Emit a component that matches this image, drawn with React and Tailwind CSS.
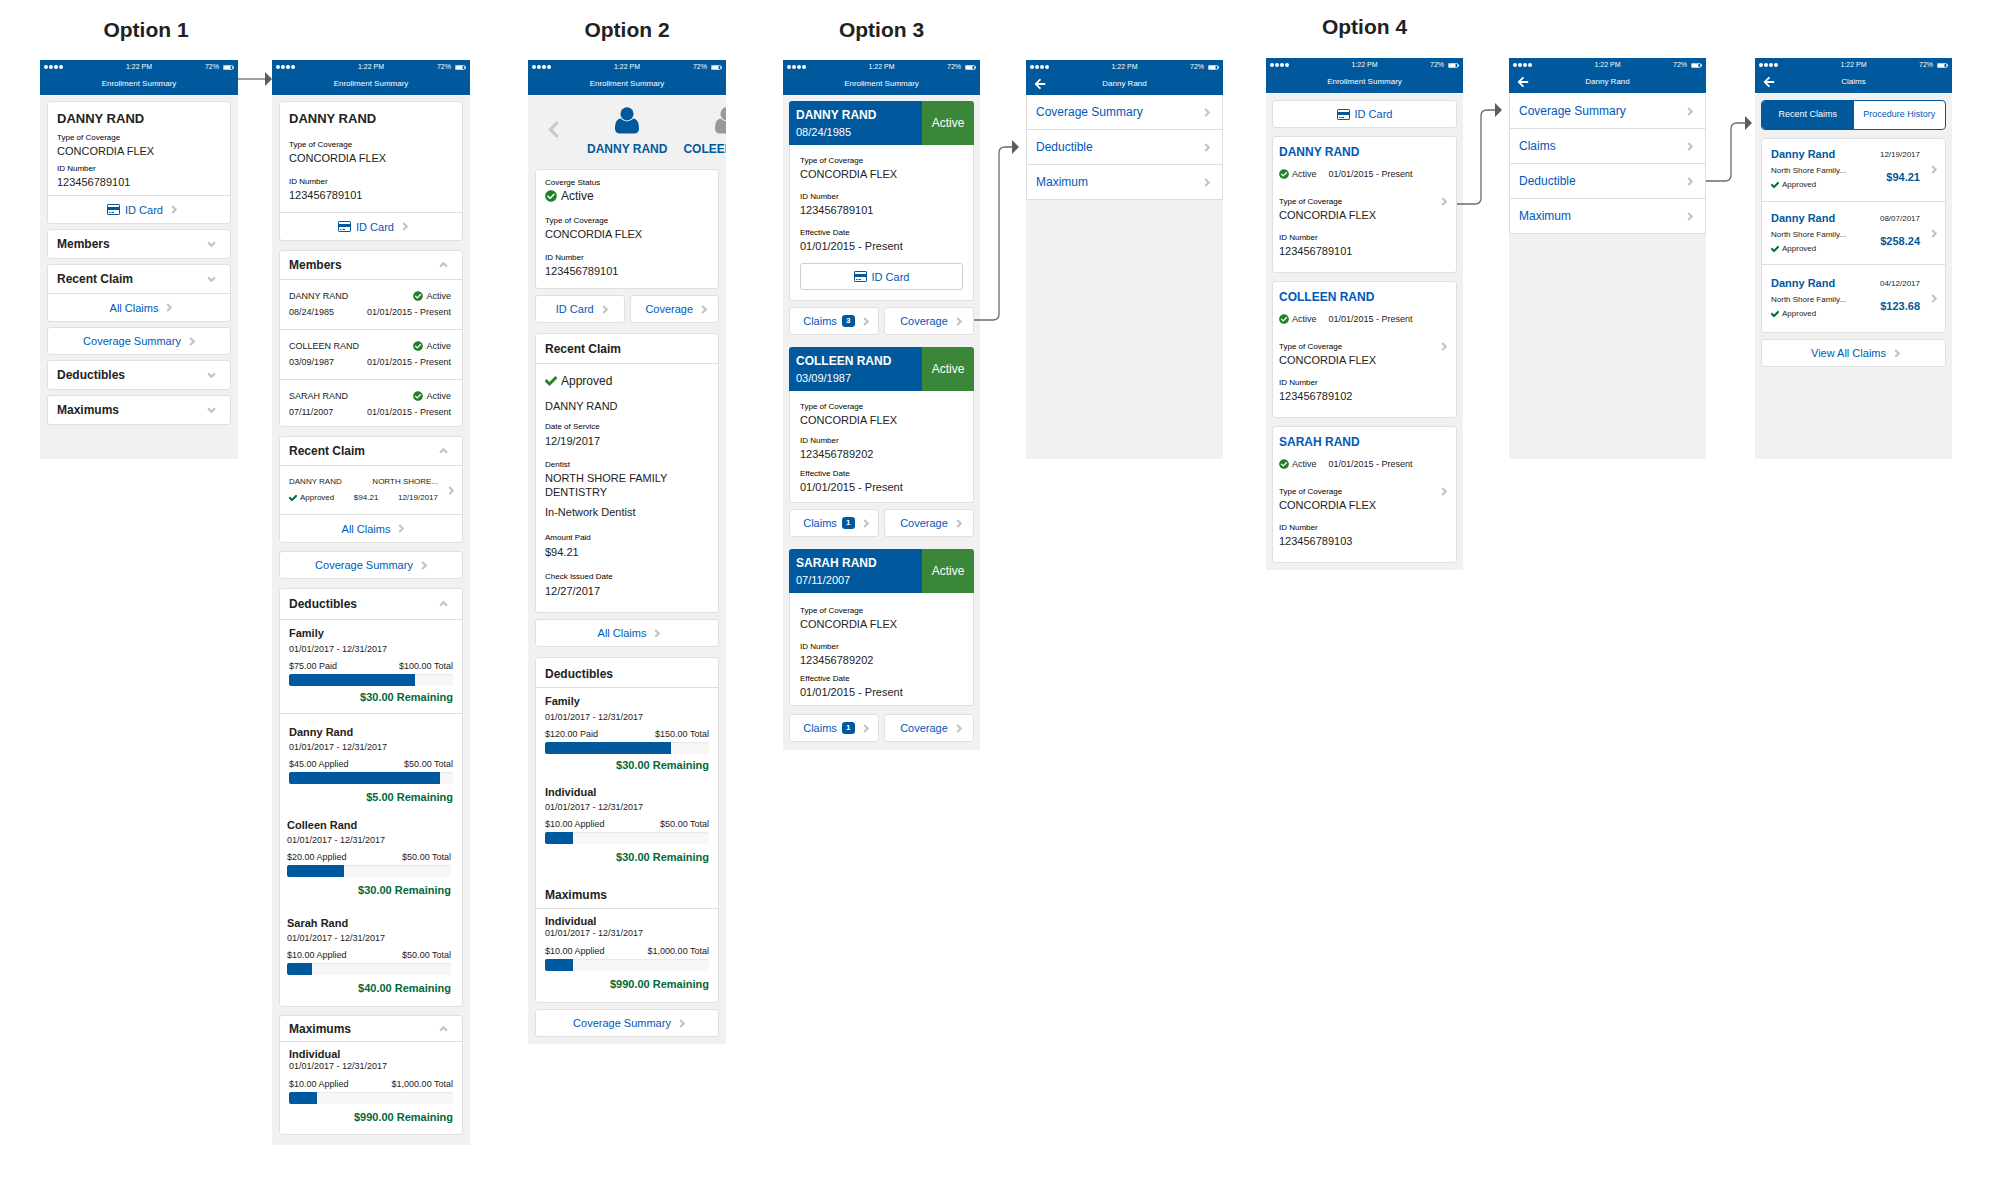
import React from "react";
import { FaArrowLeft, FaCheck, FaCheckCircle } from "react-icons/fa";

/* ---------- icons ---------- */

const chevronPaths = {
  right: "M1.2 1 4.8 4.5 1.2 8",
  down: "M1 1.2 4.5 4.8 8 1.2",
  up: "M1 4.8 4.5 1.2 8 4.8",
};

function Chevron({ dir = "right" }) {
  const side = dir === "right";
  return (
    <svg
      width={side ? 6 : 9}
      height={side ? 9 : 6}
      viewBox={side ? "0 0 6 9" : "0 0 9 6"}
      className="shrink-0 text-[#c2c2c2]"
      fill="none"
      stroke="currentColor"
      strokeWidth="2"
      aria-hidden="true"
    >
      <path d={chevronPaths[dir]} />
    </svg>
  );
}

function CardIcon() {
  return (
    <svg width="13" height="11" viewBox="0 0 13 11" className="shrink-0 text-[#00599c]" aria-hidden="true">
      <rect x="0.5" y="0.5" width="12" height="10" rx="0.6" fill="#fff" stroke="currentColor" />
      <rect x="0" y="3" width="13" height="3" fill="currentColor" />
      <path d="M2 8.5h1.500M4.500 8.500h2.500" stroke="currentColor" strokeWidth="1" fill="none" />
    </svg>
  );
}

function PersonIcon({ className }) {
  return (
    <svg width="24" height="27" viewBox="0 0 24 27" className={className} fill="currentColor" aria-hidden="true">
      <circle cx="12" cy="6.8" r="6.6" />
      <path d="M5.9 11.6C7.400 13.300 9.500 14.400 12 14.400s4.600-1.100 6.100-2.800c4.300 0.300 5.900 4.700 5.900 9.900 0 3.200-2 5.100-4.800 5.100H4.800C2 26.600 0 24.700 0 21.500c0-5.200 1.600-9.600 5.900-9.900Z" />
    </svg>
  );
}

function Battery() {
  return (
    <svg width="11" height="5" viewBox="0 0 11 5" aria-hidden="true">
      <rect x="0.4" y="0.4" width="9.2" height="4.2" rx="0.8" fill="none" stroke="#fff" strokeWidth="0.8" />
      <rect x="1" y="1" width="6.500" height="3" fill="#fff" />
      <rect x="10" y="1.500" width="1" height="2" fill="#fff" />
    </svg>
  );
}

/* ---------- shared pieces ---------- */

function TopBar({ title, back }) {
  return (
    <header className="h-[35px] bg-[#00599c] text-white">
      <div className="grid h-[14px] grid-cols-3 items-center px-1 text-[7px] leading-3">
        <span className="flex gap-px" aria-hidden="true">
          {[0, 1, 2, 3].map((i) => (
            <i key={i} className="size-1 rounded-full bg-white" />
          ))}
        </span>
        <span className="text-center">1:22 PM</span>
        <span className="flex items-center justify-end gap-1">
          72% <Battery />
        </span>
      </div>
      <div className="grid h-5 grid-cols-[24px_1fr_24px] items-center">
        {back ? (
          <button type="button" aria-label="Back" className="flex justify-end">
            <FaArrowLeft size={12} className="mr-1" />
          </button>
        ) : (
          <span />
        )}
        <h3 className="text-center text-[8px] leading-3">{title}</h3>
      </div>
    </header>
  );
}

function Screen({ title, back, place, body, children }) {
  return (
    <article className={`min-w-0 self-start ${place}`}>
      <TopBar title={title} back={back} />
      <div className={`flex flex-col border-t border-white bg-[#f1f1f1] ${body}`}>{children}</div>
    </article>
  );
}

function Card({ className = "", children }) {
  return <section className={`rounded-[3px] border border-[#e0e0e0] bg-white ${className}`}>{children}</section>;
}

function Field({ label, value, className = "", gap = "" }) {
  return (
    <div className={className}>
      <div className="text-[8px] leading-3 text-black">{label}</div>
      <div className={`text-[11px] leading-[14px] ${gap}`}>{value}</div>
    </div>
  );
}

function Action({ children, icon, chevron = true, className = "" }) {
  return (
    <a href="#" className={`flex items-center justify-center gap-2 text-[11px] leading-[14px] text-[#0058b8] ${className}`}>
      <span className="flex items-center gap-[5px]">
        {icon && <CardIcon />}
        {children}
      </span>
      {chevron && <Chevron />}
    </a>
  );
}

function ActionCard({ className = "h-7", ...rest }) {
  return <Action {...rest} className={`rounded-[3px] border border-[#e0e0e0] bg-white ${className}`} />;
}

function Accordion({ title, open, className = "h-7" }) {
  return (
    <button
      type="button"
      aria-expanded={!!open}
      className={`flex w-full items-center justify-between pr-[14px] pl-[9px] text-[12px] leading-[14px] font-bold ${className}`}
    >
      {title}
      <Chevron dir={open ? "up" : "down"} />
    </button>
  );
}

function Meter({ name, left, total, fill, remaining, className = "", dateGap = "mt-[3px]", rowGap = "mt-[5px]", remGap = "mt-1.5" }) {
  return (
    <div className={className}>
      <div className="text-[11px] leading-3 font-bold">{name}</div>
      <div className={`text-[9px] leading-3 ${dateGap}`}>01/01/2017 - 12/31/2017</div>
      <div className={`flex justify-between text-[9px] leading-3 ${rowGap}`}>
        <span>{left}</span>
        <span>{total} Total</span>
      </div>
      <div
        role="progressbar"
        aria-label={name}
        aria-valuenow={fill}
        className="mt-0.5 h-3 overflow-hidden rounded-[2px] bg-[#f7f7f7] shadow-[inset_0_1px_1px_#e6e6e6]"
      >
        <div className="h-full bg-[#00599c]" style={{ width: `${fill}%` }} />
      </div>
      <div className={`text-right text-[11px] leading-[14px] font-bold text-[#00693c] ${remGap}`}>{remaining} Remaining</div>
    </div>
  );
}

function Active() {
  return (
    <span className="flex items-center gap-[3px] text-[9px] leading-3">
      <FaCheckCircle size={10} className="text-[#24812b]" /> Active
    </span>
  );
}

function Approved() {
  return (
    <span className="flex items-center gap-[3px] text-[8px] leading-3">
      <FaCheck size={8} className="text-[#00693c]" stroke="currentColor" strokeWidth={50} /> Approved
    </span>
  );
}

function Connector({ place, d, tip }) {
  const [x, y] = tip;
  return (
    <div className={`relative z-10 row-start-2 h-0 ${place}`}>
      <svg width="100%" height="1" className="absolute top-0 left-0 overflow-visible" fill="none" aria-hidden="true">
        <path d={d} stroke="#6a6a6a" strokeWidth="1.3" />
        <path d={`M${x} ${y}l-7 -7v14z`} fill="#5c5c5c" />
      </svg>
    </div>
  );
}

/* ---------- option 1 ---------- */

function CollapsedSummary() {
  return (
    <Screen title="Enrollment Summary" place="col-start-2 row-start-2 mt-0.5" body="gap-[5px] px-[7px] pt-[5px] pb-[34px]">
      <Card>
        <div className="px-[9px] pt-[9px] pb-1.5">
          <h4 className="text-[13px] leading-4 font-bold">DANNY RAND</h4>
          <Field className="mt-[5px]" label="Type of Coverage" value="CONCORDIA FLEX" />
          <Field className="mt-[5px]" label="ID Number" value="123456789101" />
        </div>
        <Action icon className="h-7 border-t border-[#dedede] pl-1.5">ID Card</Action>
      </Card>
      <Card>
        <Accordion title="Members" />
      </Card>
      <Card>
        <Accordion title="Recent Claim" />
        <Action className="h-7 border-t border-[#dedede] pl-1">All Claims</Action>
      </Card>
      <ActionCard>Coverage Summary</ActionCard>
      <Card>
        <Accordion title="Deductibles" />
      </Card>
      <Card>
        <Accordion title="Maximums" />
      </Card>
    </Screen>
  );
}

const members = [
  ["DANNY RAND", "08/24/1985"],
  ["COLLEEN RAND", "03/09/1987"],
  ["SARAH RAND", "07/11/2007"],
];

function ExpandedSummary() {
  return (
    <Screen title="Enrollment Summary" place="col-start-4 row-start-2 mt-0.5" body="px-[7px] pt-[5px] pb-2.5">
      <Card>
        <div className="px-[9px] pt-[9px] pb-2.5">
          <h4 className="text-[13px] leading-4 font-bold">DANNY RAND</h4>
          <Field className="mt-3" label="Type of Coverage" value="CONCORDIA FLEX" />
          <Field className="mt-[11px]" label="ID Number" value="123456789101" />
        </div>
        <Action icon className="h-7 border-t border-[#dedede] pl-1">ID Card</Action>
      </Card>

      <Card className="mt-[9px]">
        <Accordion title="Members" open />
        <ul>
          {members.map(([name, dob]) => (
            <li key={name} className="border-t border-[#dedede] pt-2.5 pr-[11px] pb-[11px] pl-[9px] text-[9px] leading-3 last:pb-2">
              <div className="flex justify-between">
                <span>{name}</span>
                <Active />
              </div>
              <div className="mt-1 flex justify-between">
                <span>{dob}</span>
                <span>01/01/2015 - Present</span>
              </div>
            </li>
          ))}
        </ul>
      </Card>

      <Card className="mt-[9px]">
        <Accordion title="Recent Claim" open />
        <a href="#" className="flex items-center gap-2.5 border-t border-[#dedede] py-2.5 pr-2 pl-[9px] text-[8px] leading-3">
          <span className="flex-1">
            <span className="flex justify-between">
              <span>DANNY RAND</span>
              <span>NORTH SHORE...</span>
            </span>
            <span className="mt-1 flex justify-between">
              <Approved />
              <span>$94.21</span>
              <span>12/19/2017</span>
            </span>
          </span>
          <Chevron />
        </a>
        <Action className="h-7 border-t border-[#dedede] pl-1">All Claims</Action>
      </Card>

      <ActionCard className="mt-2 h-7">Coverage Summary</ActionCard>

      <Card className="mt-[9px]">
        <Accordion title="Deductibles" open className="h-[30px]" />
        <Meter
          className="border-t border-[#dedede] px-[9px] pt-[7px] pb-[9px]"
          dateGap="mt-1"
          remGap="mt-1"
          name="Family"
          left="$75.00 Paid"
          total="$100.00"
          fill={77}
          remaining="$30.00"
        />
        <Meter
          className="border-t border-[#dedede] px-[9px] pt-3 pb-[15px]"
          name="Danny Rand"
          left="$45.00 Applied"
          total="$50.00"
          fill={92}
          remaining="$5.00"
        />
        <div className="flex flex-col gap-5 pr-[11px] pb-[11px] pl-[7px]">
          <Meter name="Colleen Rand" left="$20.00 Applied" total="$50.00" fill={35} remaining="$30.00" />
          <Meter name="Sarah Rand" left="$10.00 Applied" total="$50.00" fill={15} remaining="$40.00" />
        </div>
      </Card>

      <Card className="mt-2">
        <Accordion title="Maximums" open className="h-[25px]" />
        <Meter
          className="border-t border-[#dedede] px-[9px] pt-1.5 pb-2.5"
          dateGap=""
          rowGap="mt-1.5"
          name="Individual"
          left="$10.00 Applied"
          total="$1,000.00"
          fill={17}
          remaining="$990.00"
        />
      </Card>
    </Screen>
  );
}

/* ---------- option 2 ---------- */

function CarouselSummary() {
  return (
    <Screen title="Enrollment Summary" place="col-start-6 row-start-2 mt-0.5" body="px-[7px] pb-[7px]">
      <div className="-mx-[7px] flex h-[73px] overflow-hidden pt-[11px] pl-5">
        <button type="button" aria-label="Previous member" className="mr-[28px] h-[44px] shrink-0 text-[#c8c8c8]">
          <svg width="11" height="17" viewBox="0 0 11 17" fill="none" stroke="currentColor" strokeWidth="3.2" aria-hidden="true">
            <path d="M9.700 1.200 2.500 8.500 9.700 15.800" />
          </svg>
        </button>
        {[
          ["DANNY RAND", "text-[#00599c]"],
          ["COLEEN RAND", "text-[#999]"],
        ].map(([name, tint]) => (
          <button key={name} type="button" className="mr-4 flex shrink-0 flex-col items-center">
            <PersonIcon className={tint} />
            <span className="mt-2 text-[12px] leading-[14px] font-bold text-[#00599c]">{name}</span>
          </button>
        ))}
      </div>

      <Card className="px-[9px] pt-[7px] pb-2.5">
        <Field
          label="Coverge Status"
          value={
            <span className="flex items-center gap-1 text-[12px]">
              <FaCheckCircle size={12} className="text-[#24812b]" /> Active
            </span>
          }
        />
        <Field className="mt-3" label="Type of Coverage" value="CONCORDIA FLEX" />
        <Field className="mt-[11px]" label="ID Number" value="123456789101" />
      </Card>

      <div className="mt-1.5 grid grid-cols-2 gap-[5px]">
        <ActionCard className="h-7 pl-1">ID Card</ActionCard>
        <ActionCard className="h-7 pl-1">Coverage</ActionCard>
      </div>

      <Card className="mt-2.5">
        <h4 className="flex h-[29px] items-center px-[9px] text-[12px] font-bold">Recent Claim</h4>
        <div className="border-t border-[#dedede] px-[9px] pt-2.5 pb-[14px] text-[11px] leading-[14px]">
          <div className="flex items-center gap-1 text-[12px] leading-[14px]">
            <FaCheck size={12} className="text-[#24812b]" stroke="currentColor" strokeWidth={30} /> Approved
          </div>
          <div className="mt-[11px]">DANNY RAND</div>
          <Field className="mt-2" gap="mt-px" label="Date of Service" value="12/19/2017" />
          <Field className="mt-[11px]" label="Dentist" value="NORTH SHORE FAMILY DENTISTRY" />
          <div className="mt-1.5">In-Network Dentist</div>
          <Field className="mt-[13px]" gap="mt-px" label="Amount Paid" value="$94.21" />
          <Field className="mt-3" gap="mt-px" label="Check Issued Date" value="12/27/2017" />
        </div>
      </Card>

      <ActionCard className="mt-1.5 h-7 pl-1">All Claims</ActionCard>

      <Card className="mt-2.5">
        <h4 className="flex h-[29px] items-center px-[9px] pt-0.5 text-[12px] font-bold">Deductibles</h4>
        <div className="flex flex-col gap-[14px] border-t border-[#dedede] px-[9px] pt-[7px]">
          <Meter dateGap="mt-1" remGap="mt-1" name="Family" left="$120.00 Paid" total="$150.00" fill={77} remaining="$30.00" />
          <Meter name="Individual" left="$10.00 Applied" total="$50.00" fill={17} remaining="$30.00" />
        </div>
        <h4 className="mt-6 px-[9px] pb-1.5 text-[12px] leading-[14px] font-bold">Maximums</h4>
        <Meter
          className="border-t border-[#dedede] px-[9px] pt-1.5 pb-[11px]"
          dateGap=""
          rowGap="mt-1.5"
          name="Individual"
          left="$10.00 Applied"
          total="$1,000.00"
          fill={17}
          remaining="$990.00"
        />
      </Card>

      <ActionCard className="mt-1.5 h-7 pl-1">Coverage Summary</ActionCard>
    </Screen>
  );
}

/* ---------- option 3 ---------- */

function MemberBlock({ name, dob, id, claims, card, body, gap, actions, className = "" }) {
  return (
    <section className={className}>
      <div className="flex h-11 overflow-hidden rounded-t-[3px] text-white">
        <div className="flex-1 bg-[#00599c] pt-[7px] pl-[7px]">
          <h4 className="text-[12px] leading-[14px] font-bold">{name}</h4>
          <p className="mt-[3px] text-[11px] leading-[14px]">{dob}</p>
        </div>
        <div className="flex w-[52px] items-center justify-center bg-[#3a873a] text-[12px]">Active</div>
      </div>
      <div className={`flex flex-col rounded-b-[3px] border border-t-0 border-[#e0e0e0] bg-white px-2.5 ${body}`}>
        <Field label="Type of Coverage" value="CONCORDIA FLEX" />
        <Field className={gap[0]} label="ID Number" value={id} />
        <Field className={gap[1]} label="Effective Date" value="01/01/2015 - Present" />
        {card && (
          <Action icon chevron={false} className="mt-2.5 h-[27px] rounded-[3px] border border-[#cfcfcf]">
            ID Card
          </Action>
        )}
      </div>
      <div className={`grid grid-cols-2 gap-[5px] ${actions}`}>
        <ActionCard className="h-7 pl-1">
          Claims
          <span className="flex h-3 w-[13px] items-center justify-center rounded-[3px] bg-[#00599c] text-[8px] font-bold text-white">
            {claims}
          </span>
        </ActionCard>
        <ActionCard className="h-7 pl-1">Coverage</ActionCard>
      </div>
    </section>
  );
}

function MemberCards() {
  return (
    <Screen title="Enrollment Summary" place="col-start-8 row-start-2 mt-0.5" body="gap-3 px-1.5 pt-[5px] pb-2">
      <MemberBlock
        name="DANNY RAND"
        dob="08/24/1985"
        id="123456789101"
        claims="3"
        card
        body="pt-2.5 pb-2.5"
        gap={["mt-2.5", "mt-2.5"]}
        actions="mt-1.5"
      />
      <MemberBlock
        name="COLLEEN RAND"
        dob="03/09/1987"
        id="123456789202"
        claims="1"
        body="pt-2.5 pb-2"
        gap={["mt-2", "mt-[7px]"]}
        actions="mt-1.5"
      />
      <MemberBlock
        name="SARAH RAND"
        dob="07/11/2007"
        id="123456789202"
        claims="1"
        body="pt-3 pb-1.5"
        gap={["mt-2.5", "mt-1.5"]}
        actions="mt-2"
      />
    </Screen>
  );
}

function MenuScreen({ title, items, place, size }) {
  return (
    <article className={`min-w-0 self-start ${place}`}>
      <TopBar title={title} back />
      <nav className={`bg-[#f1f1f1] ${size}`}>
        {items.map((item) => (
          <a
            key={item}
            href="#"
            className="flex h-[35px] items-center justify-between border-x border-b border-[#dedede] bg-white pr-3 pl-[9px] text-[12px] font-medium text-[#0058b8]"
          >
            {item}
            <Chevron />
          </a>
        ))}
      </nav>
    </article>
  );
}

/* ---------- option 4 ---------- */

const enrollees = [
  ["DANNY RAND", "123456789101"],
  ["COLLEEN RAND", "123456789102"],
  ["SARAH RAND", "123456789103"],
];

function EnrolleeList() {
  return (
    <Screen title="Enrollment Summary" place="col-start-12 row-start-2" body="gap-2 px-1.5 pt-1.5 pb-[7px]">
      <ActionCard icon chevron={false}>ID Card</ActionCard>
      {enrollees.map(([name, id]) => (
        <Card key={name}>
          <a href="#" className="flex items-center justify-between pt-2 pr-[9px] pb-[14px] pl-1.5">
            <span className="block">
              <strong className="block text-[12px] leading-[14px] text-[#0058b8]">{name}</strong>
              <span className="mt-[9px] flex gap-3 text-[9px] leading-3">
                <Active />
                <span>01/01/2015 - Present</span>
              </span>
              <Field className="mt-4" label="Type of Coverage" value="CONCORDIA FLEX" />
              <Field className="mt-2.5" label="ID Number" value={id} />
            </span>
            <Chevron />
          </a>
        </Card>
      ))}
    </Screen>
  );
}

const claims = [
  ["12/19/2017", "$94.21", "pt-2 pb-2.5"],
  ["08/07/2017", "$258.24", "py-[9px]"],
  ["04/12/2017", "$123.68", "pt-[11px] pb-3"],
];

function ClaimsScreen() {
  return (
    <Screen title="Claims" back place="col-start-16 row-start-2" body="min-h-[366px] px-1.5 pt-1.5">
      <div className="grid h-[30px] grid-cols-2 overflow-hidden rounded-[4px] border border-[#00599c] bg-white text-[9px]">
        <button type="button" aria-pressed="true" className="bg-[#00599c] text-white">
          Recent Claims
        </button>
        <button type="button" aria-pressed="false" className="text-[#0058b8]">
          Procedure History
        </button>
      </div>
      <Card className="mt-2 divide-y divide-[#dedede]">
        {claims.map(([date, amount, pad]) => (
          <a key={date} href="#" className={`flex items-center gap-[11px] pr-2 pl-[9px] ${pad}`}>
            <span className="block flex-1">
              <strong className="block text-[11px] leading-[14px] text-[#00599c]">Danny Rand</strong>
              <span className="mt-1 mb-0.5 block text-[8px] leading-3">North Shore Family...</span>
              <Approved />
            </span>
            <span className="block self-start text-right">
              <span className="block text-[8px] leading-4">{date}</span>
              <strong className="mt-[7px] block text-[11px] leading-[14px] text-[#00599c]">{amount}</strong>
            </span>
            <Chevron />
          </a>
        ))}
      </Card>
      <ActionCard className="mt-1.5 h-7 pl-1">View All Claims</ActionCard>
    </Screen>
  );
}

/* ---------- board ---------- */

const heading = "row-start-1 text-center text-[21px] leading-6 font-bold whitespace-nowrap";

export default function App() {
  return (
    <main className="grid min-h-screen w-full grid-cols-[40fr_198fr_34fr_198fr_58fr_198fr_57fr_197fr_46fr_197fr_43fr_197fr_46fr_197fr_49fr_197fr_48fr] grid-rows-[58px_1fr] bg-white font-['Liberation_Sans',Arial,sans-serif] text-[#222]">
      <h2 className={`${heading} col-start-2 pt-[18px] pl-[14px]`}>Option 1</h2>
      <h2 className={`${heading} col-start-6 pt-[18px]`}>Option 2</h2>
      <h2 className={`${heading} col-start-8 pt-[18px]`}>Option 3</h2>
      <h2 className={`${heading} col-start-12 pt-[15px]`}>Option 4</h2>

      <CollapsedSummary />
      <Connector place="col-start-3" d="M0 21H28" tip={[34, 21]} />
      <ExpandedSummary />

      <CarouselSummary />

      <MemberCards />
      <Connector place="col-start-9" d="M-6 262H13Q19 262 19 256V95Q19 89 25 89H34" tip={[39, 89]} />
      <MenuScreen
        title="Danny Rand"
        place="col-start-10 row-start-2 mt-0.5"
        size="min-h-[364px]"
        items={["Coverage Summary", "Deductible", "Maximum"]}
      />

      <EnrolleeList />
      <Connector place="col-start-13" d="M-6 146H12Q18 146 18 140V58Q18 52 24 52H34" tip={[39, 52]} />
      <MenuScreen
        title="Danny Rand"
        place="col-start-14 row-start-2"
        size="min-h-[366px] border-t border-white"
        items={["Coverage Summary", "Claims", "Deductible", "Maximum"]}
      />
      <Connector place="col-start-15" d="M0 123H19Q25 123 25 117V71Q25 65 31 65H41" tip={[46, 65]} />
      <ClaimsScreen />
    </main>
  );
}
